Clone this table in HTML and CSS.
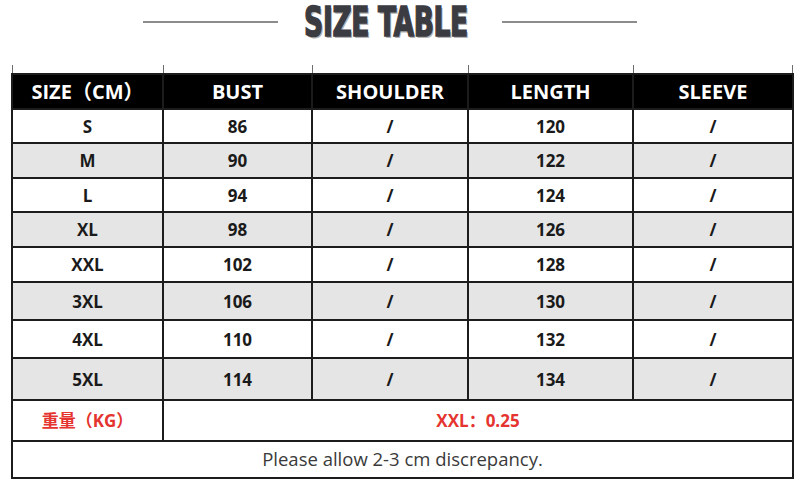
FILE: index.html
```html
<!DOCTYPE html>
<html lang="en">
<head>
<meta charset="utf-8">
<title>Size Table</title>
<link rel="stylesheet" href="styles.css">
</head>
<body>
<div class="page">
  <div class="title-row">
    <span class="rule"></span>
    <div class="title"><span class="title-text">SIZE TABLE</span></div>
    <span class="rule"></span>
  </div>
  <div class="ticks">
    <span class="tick"></span><span class="tick"></span><span class="tick"></span><span class="tick"></span><span class="tick last"></span>
  </div>
  <div class="table">
    <div class="cell head">SIZE（CM）</div>
    <div class="cell head">BUST</div>
    <div class="cell head">SHOULDER</div>
    <div class="cell head">LENGTH</div>
    <div class="cell head">SLEEVE</div>

    <div class="cell">S</div><div class="cell">86</div><div class="cell">/</div><div class="cell">120</div><div class="cell">/</div>
    <div class="cell alt">M</div><div class="cell alt">90</div><div class="cell alt">/</div><div class="cell alt">122</div><div class="cell alt">/</div>
    <div class="cell">L</div><div class="cell">94</div><div class="cell">/</div><div class="cell">124</div><div class="cell">/</div>
    <div class="cell alt">XL</div><div class="cell alt">98</div><div class="cell alt">/</div><div class="cell alt">126</div><div class="cell alt">/</div>
    <div class="cell">XXL</div><div class="cell">102</div><div class="cell">/</div><div class="cell">128</div><div class="cell">/</div>
    <div class="cell alt">3XL</div><div class="cell alt">106</div><div class="cell alt">/</div><div class="cell alt">130</div><div class="cell alt">/</div>
    <div class="cell">4XL</div><div class="cell">110</div><div class="cell">/</div><div class="cell">132</div><div class="cell">/</div>
    <div class="cell alt">5XL</div><div class="cell alt">114</div><div class="cell alt">/</div><div class="cell alt">134</div><div class="cell alt">/</div>

    <div class="cell red">重量（KG）</div>
    <div class="cell red span4">XXL：0.25</div>

    <div class="cell note span5">Please allow 2-3 cm discrepancy.</div>
  </div>
</div>
</body>
</html>
```
FILE: styles.css
```css
* { box-sizing: border-box; }
html, body { margin: 0; padding: 0; background: #ffffff; }
body {
  width: 806px;
  height: 492px;
  overflow: hidden;
  font-family: "Open Sans", "Noto Sans CJK SC", sans-serif;
}
.page { display: flex; flex-direction: column; }

.title-row {
  height: 50px;
  margin-top: -3px;
  display: flex;
  align-items: center;
  padding-left: 143px;
}
.rule {
  display: block;
  flex: none;
  width: 135px;
  height: 2px;
  background: #8c8c8c;
}
.title {
  flex: none;
  margin: 0 1px 0 -6px;
}
.title-text {
  display: block;
  font-family: "DejaVu Sans Condensed", "DejaVu Sans", sans-serif;
  font-weight: bold;
  font-size: 41px;
  line-height: 50px;
  color: #3b3b42;
  -webkit-text-stroke: 1.5px #3b3b42;
  text-shadow: 2px 2px 0 #b4b4b4;
  transform: scaleX(0.72);
  white-space: nowrap;
  letter-spacing: -0.5px;
  padding-right: 2px;
}

.ticks {
  display: flex;
  margin: 18px 0 0 12px;
  height: 8px;
}
.tick {
  display: block;
  height: 8px;
  border-left: 1px solid #6e6e6e;
}
.tick:nth-child(1) { width: 151px; }
.tick:nth-child(2) { width: 149px; }
.tick:nth-child(3) { width: 156px; }
.tick:nth-child(4) { width: 165px; }
.tick:nth-child(5) { width: 160px; }
.tick.last { border-right: 1px solid #6e6e6e; }

.table {
  display: grid;
  grid-template-columns: 149px 147px 154px 163px 158px;
  grid-template-rows: 33px 32px 33px 32px 33px 33px 36px 36px 40px 39px 35px;
  gap: 2px;
  padding: 2px;
  background: #1c1c1c;
  margin-left: 11px;
  width: 783px;
}
.cell {
  display: flex;
  align-items: center;
  justify-content: center;
  background: #ffffff;
  color: #1a1a1a;
  font-weight: 700;
  font-size: 17px;
  line-height: 1;
}
.cell.alt { background: #e5e5e5; }
.cell.head {
  background: #000000;
  color: #ffffff;
  font-size: 20px;
}
.cell.red { color: #e5342f; font-size: 17px; }
.span4 { grid-column: span 4; }
.span5 { grid-column: span 5; }
.cell.note {
  font-weight: 400;
  font-size: 18.5px;
  color: #3a3a3a;
}
```
